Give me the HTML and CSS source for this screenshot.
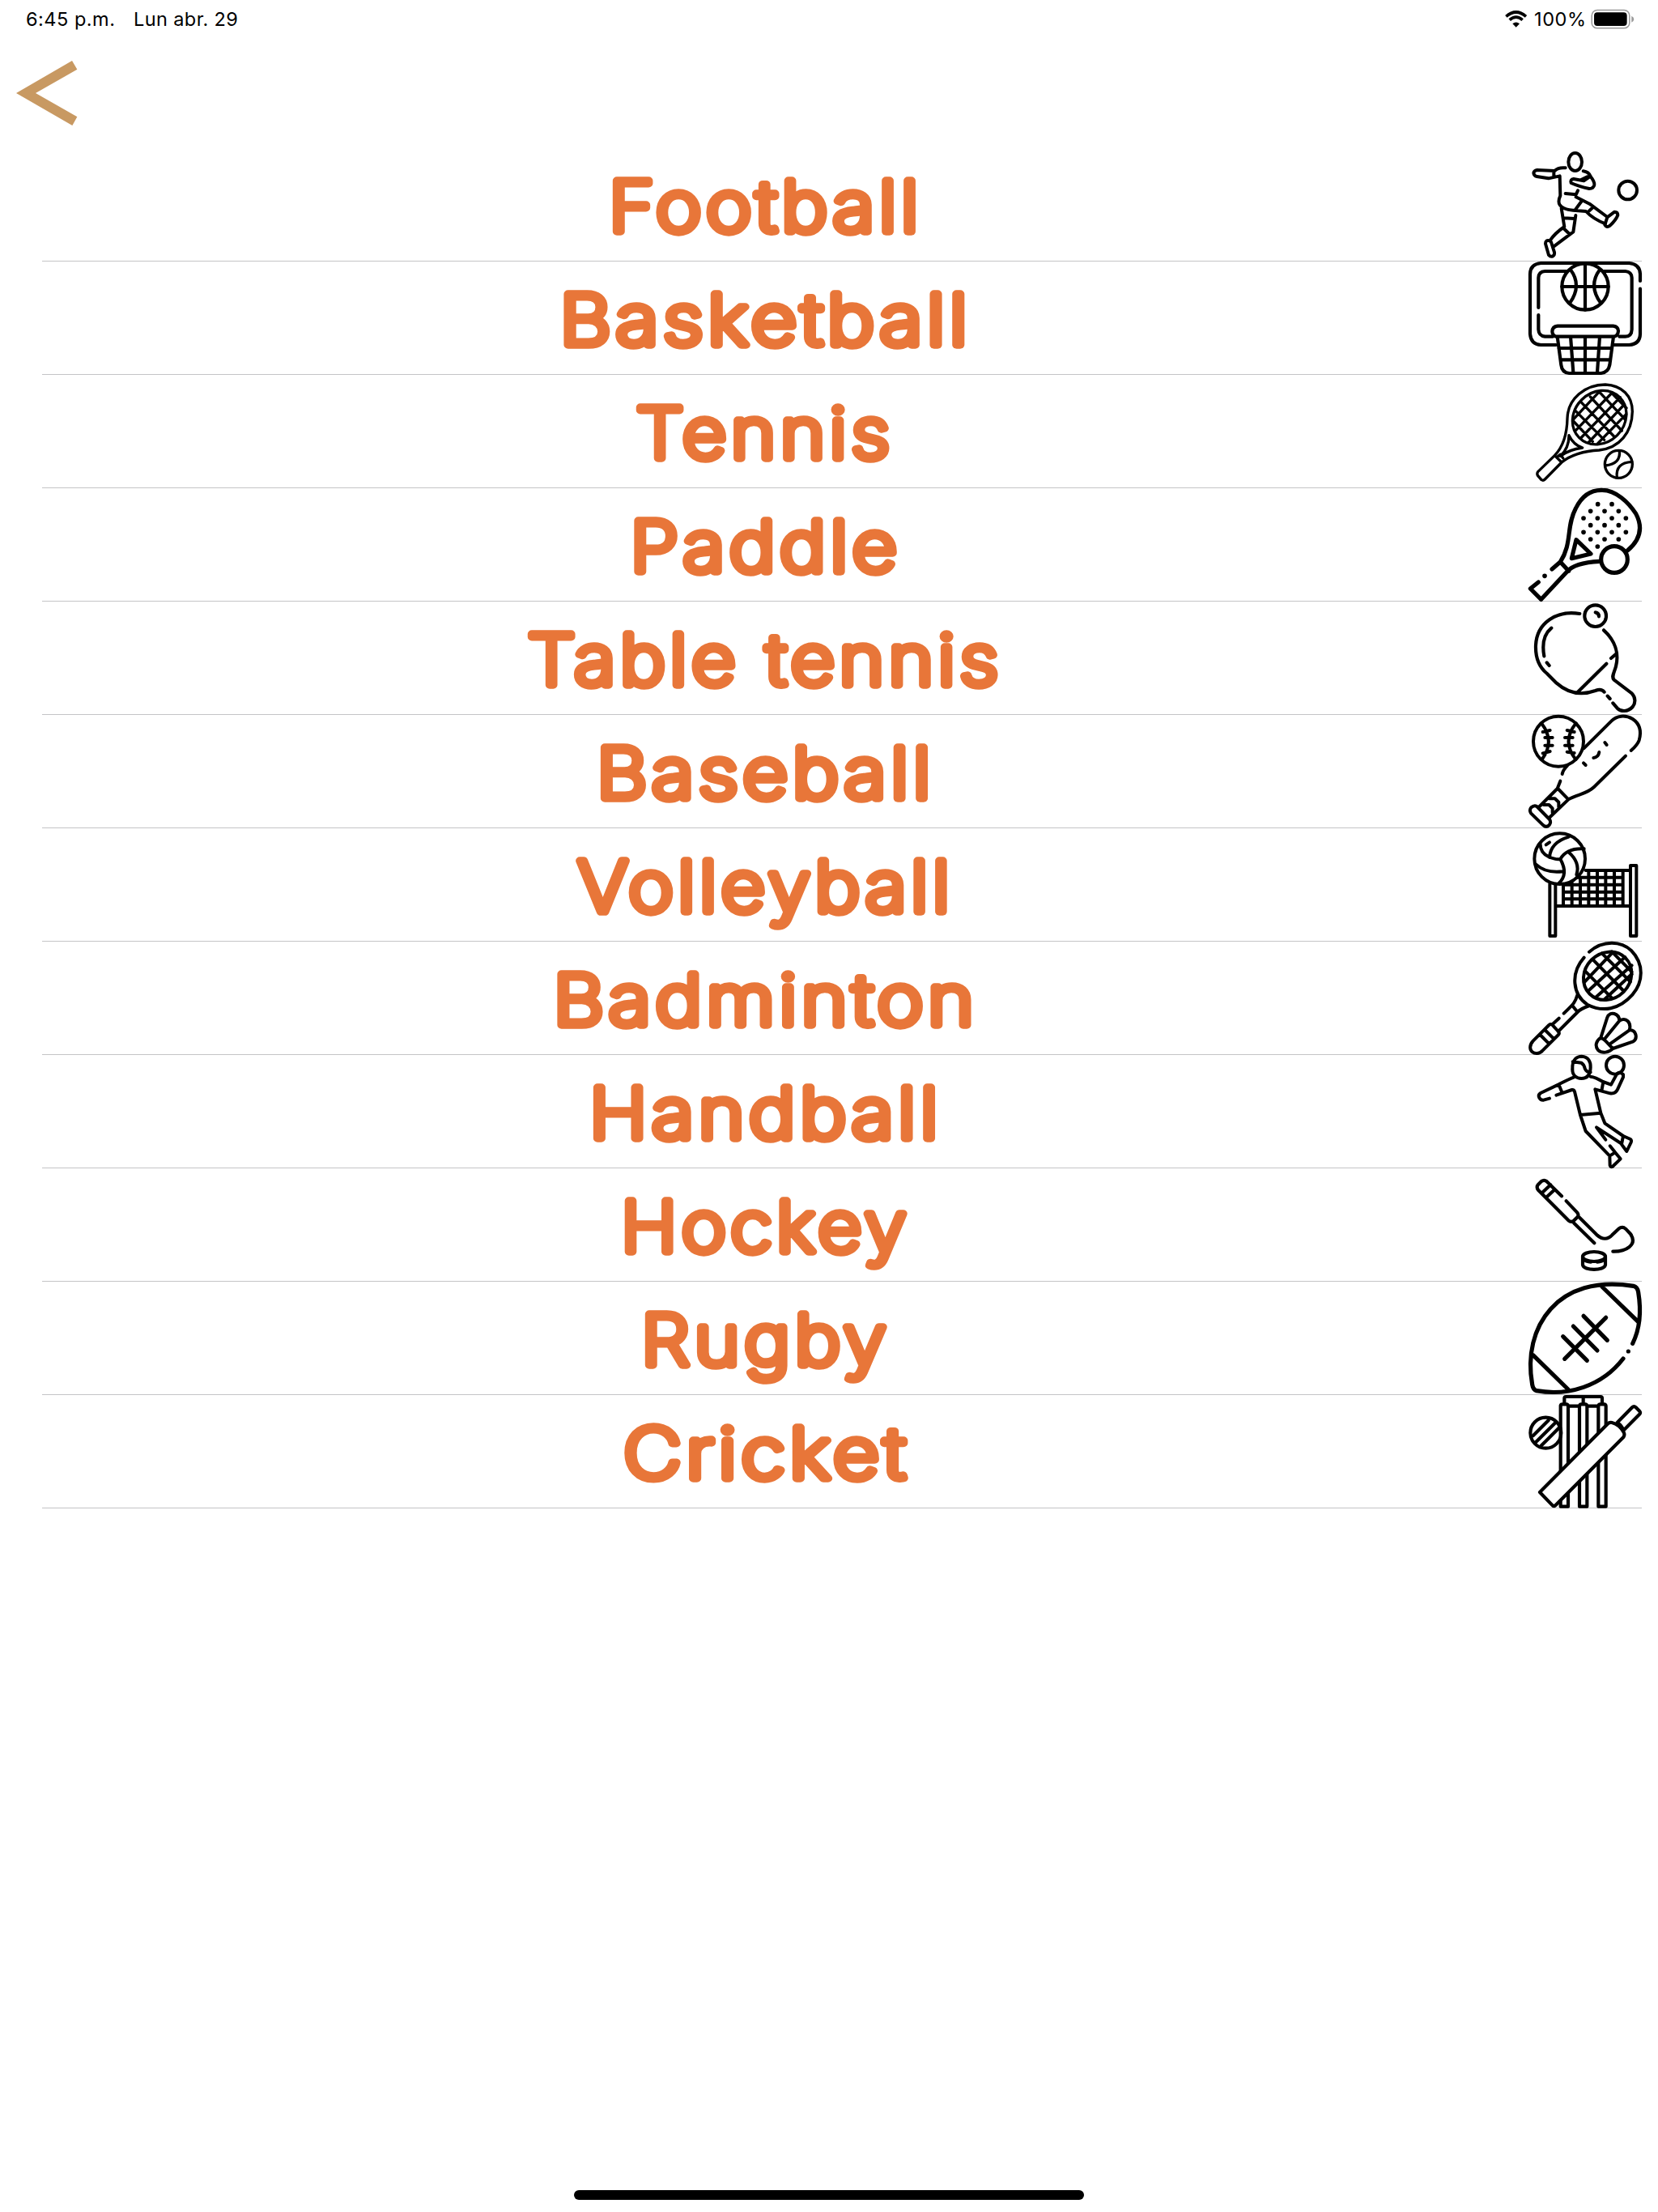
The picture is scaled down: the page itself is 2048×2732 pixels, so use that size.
FILE: index.html
```html
<!DOCTYPE html>
<html lang="es">
<head>
<meta charset="utf-8">
<title>Sports</title>
<link rel="stylesheet" href="styles.css">
</head>
<body>
<header class="status">
  <span class="status-time">6:45 p.m.</span>
  <span class="status-date">Lun abr. 29</span>
  <svg class="wifi" viewBox="34 40 84 64"><path d="M38 62Q75 30 112 62M51 75Q75 54 99 75" fill="none" stroke="#000" stroke-width="11"/><path d="M62 89Q75 78 88 89L75 102Z"/></svg>
  <span class="status-level">100%</span>
  <svg class="battery" viewBox="350 34 162 76"><rect x="353.500" y="38.500" width="140" height="67" rx="20" fill="none" stroke="#999" stroke-width="4.500"/><rect x="362" y="47" width="122" height="50" rx="12"/><path d="M501 60Q510 65 510 72T501 84Z" fill="#999"/></svg>
</header>
<nav class="nav">
  <svg class="back" viewBox="60 225 228 240"><path d="M60 345L267 225L286 257L132 345L286 433L268 465Z"/></svg>
</nav>
<main class="list">
  <div class="row">
    <svg class="label" viewBox="52 0 1836 140"><text x="946" y="103" textLength="388" lengthAdjust="spacingAndGlyphs">Football</text></svg>
    <svg class="icon" viewBox="60 9 420 420">
      <ellipse cx="233" cy="60" rx="25" ry="33"/>
      <circle cx="428" cy="165" r="34"/>
      <path d="M197 82Q171 79 157 93L92 90Q80 93 79 101Q80 112 91 114L134 121L176 112L178 185Q168 207 176 219Q186 236 225 239L273 243Q300 272 345 289M154 93V116M197 177L236 181L243 166M236 190L286 215L352 264M258 204L235 235M299 228L279 247"/>
      <path d="M352 265L379 245Q391 245 391 257Q384 275 362 296Q350 305 343 293ZM182 232L193 300Q158 324 139 352M192 268L230 270M235 258L226 319L153 374M190 306L212 327M139 352Q124 347 123 363L135 405Q141 412 149 410Q158 405 156 395L144 357Z"/>
      <path d="M263 94Q284 97 290 114Q306 134 304 145Q301 159 285 159Q247 151 218 138Q214 124 227 123L265 130L290 113M255 126L278 115"/>
    </svg>
  </div>
  <div class="row">
    <svg class="label" viewBox="52 0 1836 140"><text x="946" y="103" textLength="509" lengthAdjust="spacingAndGlyphs">Basketball</text></svg>
    <svg class="icon bold" viewBox="60 429 420 420">
      <path d="M474 501V475Q472 438 433 435H106Q67 438 66 475V697Q69 736 106 738H162M378 738H433Q473 735 474 697V530M97 600V489Q98 466 121 465H202M340 465H419Q442 467 443 489V681Q442 707 419 707H397M97 627V681Q98 704 121 707H150"/>
      <circle cx="270" cy="522" r="86"/><path d="M270 436V608M184 522H356M215 458Q260 517 213 583M325 458Q280 517 328 583"/>
      <path d="M168 668H374Q392 670 393 686Q392 704 378 707H162Q148 703 148 688Q149 670 168 668ZM167 707L181 812Q184 840 211 843H329Q356 840 361 812L375 707M216 707L226 840M324 707L315 840M270 707V843M172 750H369M179 793H364"/>
    </svg>
  </div>
  <div class="row">
    <svg class="label" viewBox="52 0 1836 140"><text x="945" y="103" textLength="319" lengthAdjust="spacingAndGlyphs">Tennis</text></svg>
    <svg class="icon thin" viewBox="60 9 420 420">
      <path d="M157 308L95 368Q90 376 95 383L108 398Q115 402 121 396L183 333ZM157 308C187 276 203 230 204 170C206 98 269 45 345 45C407 48 445 87 445 145C444 223 397 280 322 288C265 290 213 308 183 333M210 233Q210 281 178 310M210 233C220 254 239 272 260 279Q210 286 178 310M165 314L178 304L188 317"/>
      <ellipse cx="323" cy="167" rx="106" ry="93" transform="rotate(-45 323 167)"/>
      <path d="M289 90L406 216M257 112L377 237M235 143L341 250M226 180L298 256M327 77L418 174M235 215L370 75M226 174L320 74M254 243L400 92M284 258L414 120M317 263L422 155M366 74L423 132"/>
      <circle cx="394" cy="340" r="51"/><path d="M397 290Q403 339 345 345M388 389Q381 335 443 331"/>
    </svg>
  </div>
  <div class="row">
    <svg class="label" viewBox="52 0 1836 140"><text x="946" y="103" textLength="335" lengthAdjust="spacingAndGlyphs">Paddle</text></svg>
    <svg class="icon heavy" viewBox="60 429 420 420">
      <path d="M97 777L67 801L107 841L203 738Q230 705 323 700M147 729L178 702C223 633 199 571 235 504C264 444 306 435 334 436C384 436 431 482 458 523C486 576 474 621 426 661M178 702L209 736M237 620L291 672L220 689Z"/>
      <circle cx="378" cy="693" r="49"/>
      <path class="dots" d="M317 488h.1M369 488h.1M290 514h.1M342 514h.1M394 514h.1M264 540h.1M316 540h.1M369 540h.1M421 540h.1M290 566h.1M342 566h.1M394 566h.1M264 592h.1M316 592h.1M369 592h.1M421 592h.1M290 618h.1M342 618h.1M394 618h.1M316 645h.1M120 754h.1"/>
    </svg>
  </div>
  <div class="row">
    <svg class="label" viewBox="52 0 1836 140"><text x="945" y="103" textLength="587" lengthAdjust="spacingAndGlyphs">Table tennis</text></svg>
    <svg class="icon bold" viewBox="60 9 420 420">
      <path d="M250 54C165 40 91 87 87 171C85 224 107 258 129 276L164 311C210 352 258 357 308 339Q330 330 341 344M339 115C382 154 396 202 384 249C378 273 366 286 377 299L443 349C459 366 456 386 446 399C428 419 402 417 389 404L373 385M353 359L362 369M145 107Q105 140 118 211M128 235L137 246M242 345L349 239M366 219L385 203"/>
      <circle cx="308" cy="62" r="40"/><path d="M308 49Q321 51 321 64"/>
    </svg>
  </div>
  <div class="row">
    <svg class="label" viewBox="52 0 1836 140"><text x="946" y="103" textLength="418" lengthAdjust="spacingAndGlyphs">Baseball</text></svg>
    <svg class="icon" viewBox="60 429 420 420">
      <circle cx="171" cy="527" r="93"/>
      <path d="M108 460Q160 527 110 594M236 460Q182 527 235 594M113 492L140 486M121 513H149M121 542H149M113 571L140 564M203 486L230 492M195 513H224M195 542H224M203 566L230 570"/>
      <path d="M265 553L367 452C387 431 419 428 446 444C470 460 480 487 470 523Q464 540 440 561M420 581L303 696C275 723 242 722 208 742L137 810M204 617Q188 633 185 648M178 674L167 702L98 771M169 702L208 742M136 739H158L172 752V770M116 762H136L149 775V791M343 531L350 540M264 607L272 615M322 567Q319 586 301 588"/>
      <path d="M91 768L138 816Q145 826 137 837Q126 848 115 838L69 793Q62 781 70 772Q81 762 91 768Z"/>
    </svg>
  </div>
  <div class="row">
    <svg class="label" viewBox="52 0 1836 140"><text x="946" y="103" textLength="465" lengthAdjust="spacingAndGlyphs">Volleyball</text></svg>
    <svg class="icon" viewBox="60 9 420 420">
      <path d="M139 215V408H160V215M438 147H460V408H438ZM272 165H438M240 191H409M189 218H409M189 245H409M189 271H409M160 297H438M189 215V297M221 211V297M252 190V297M283 167V297M315 167V297M346 167V297M378 167V297M410 167V297"/>
      <circle cx="176" cy="122" r="94"/>
      <path d="M104 69Q104 99 134 114Q163 127 178 123M138 117Q142 61 209 41M178 123Q202 81 266 85M207 96Q253 135 238 181M178 123Q209 179 173 212M88 143Q124 177 188 169M125 70L138 61"/>
    </svg>
  </div>
  <div class="row">
    <svg class="label" viewBox="52 0 1836 140"><text x="946" y="103" textLength="525" lengthAdjust="spacingAndGlyphs">Badminton</text></svg>
    <svg class="icon" viewBox="60 429 420 420">
      <path d="M285 467C339 421 404 428 441 462C489 511 486 579 445 626C396 681 336 692 278 662C224 626 214 547 266 488M241 627C232 659 222 664 191 695M286 666Q250 679 242 690L170 762M222 665L242 690M173 713L150 734M136 738L77 797C47 831 88 859 112 833L171 774Q177 767 168 759L148 737Q142 733 136 738ZM103 774L134 805M121 756L152 787"/>
      <ellipse cx="353" cy="556" rx="94" ry="84" transform="rotate(-45 353 556)"/>
      <path d="M300 497L410 609M270 538L369 638M332 472L438 578M369 466L443 541M269 577L371 470M281 612L418 486M311 634L443 517M342 643L443 549"/>
      <path d="M328 785L352 710C362 684 396 695 397 722C423 707 442 730 434 757C459 755 466 787 448 799L373 825M397 722L345 786M434 757L365 806M328 785C311 796 305 815 318 831C333 844 358 841 373 825C360 814 345 791 328 785Z"/>
    </svg>
  </div>
  <div class="row">
    <svg class="label" viewBox="52 0 1836 140"><text x="946" y="103" textLength="436" lengthAdjust="spacingAndGlyphs">Handball</text></svg>
    <svg class="icon" viewBox="60 9 420 420">
      <path d="M223 62C221 22 243 14 257 14C282 15 291 35 290 55C289 87 273 96 256 96C238 96 222 84 223 62ZM224 34L256 38Q266 44 269 59Q275 73 290 73"/>
      <circle cx="381" cy="47" r="33"/>
      <path d="M229 91Q214 96 172 118L105 150C91 159 101 177 116 176L138 170M163 158L221 138Q229 137 231 145L252 231L272 291L361 383M290 89Q308 91 336 108L366 119L386 82Q395 67 411 81L411 91L390 137Q382 154 362 151L307 136L328 224L343 262L411 309M252 231L328 224M172 118L184 147M337 110L331 141M346 323L312 277L402 336M362 346L380 368M411 309L438 321Q443 325 440 333L424 366L405 340ZM361 383L381 370L401 394L371 423Q364 426 362 418Z"/>
    </svg>
  </div>
  <div class="row">
    <svg class="label" viewBox="52 0 1836 140"><text x="946" y="103" textLength="358" lengthAdjust="spacingAndGlyphs">Hockey</text></svg>
    <svg class="icon bold" viewBox="60 429 420 420">
      <path d="M183 532L127 477Q118 470 108 477L96 489Q88 498 96 509L208 622Q219 631 229 622L242 609Q248 601 240 592L200 550M111 519L142 490M128 535L157 508M304 706L229 632M249 611L315 677C334 694 354 693 370 676L394 653Q408 642 420 653L438 672C466 713 420 738 373 737M261 756V787C264 809 342 809 345 787V756"/>
      <ellipse cx="303" cy="756" rx="42" ry="18"/><path d="M263 765Q273 775 291 776M343 765Q333 775 315 776"/>
    </svg>
  </div>
  <div class="row">
    <svg class="label" viewBox="52 0 1836 140"><text x="946" y="103" textLength="308" lengthAdjust="spacingAndGlyphs">Rugby</text></svg>
    <svg class="icon heavy" viewBox="60 9 420 420">
      <path d="M411 294C331 398 205 433 90 413Q77 409 74 390C36 176 169 -21 449 25Q464 29 467 48C477 109 478 173 446 238M77 281L207 408M332 27L466 157M264 136L352 226M226 174L315 264M188 212L277 301M194 295L347 142M430 267h.1"/>
    </svg>
  </div>
  <div class="row">
    <svg class="label" viewBox="52 0 1836 140"><text x="947" y="103" textLength="354" lengthAdjust="spacingAndGlyphs">Cricket</text></svg>
    <svg class="icon bold" viewBox="60 429 420 420">
      <circle cx="124" cy="569" r="57"/><path d="M77 580L134 523M87 604L158 533M108 616L171 553"/>
      <path d="M193 461V441Q193 435 199 435H327Q333 435 333 441V461M263 437V461M179 842V468Q180 463 186 463H201Q207 464 207 470V842ZM249 842V470Q250 463 256 463H271Q277 464 277 470V842ZM319 842V470Q320 463 326 463H341Q347 464 347 470V842ZM208 470H249M278 470H319"/>
      <path class="solid" d="M102 789L353 536Q360 529 369 531Q397 538 413 567Q418 576 412 585L160 838Q153 843 147 836ZM389 531L444 475Q451 468 458 475L472 489Q477 495 470 502L412 560Q407 543 389 531Z"/>
    </svg>
  </div>
</main>
<footer class="home"><div class="home-bar"></div></footer>
</body>
</html>
```
FILE: styles.css
```css
* { box-sizing: border-box; }
body {
  margin: 0;
  width: 2048px;
  height: 2732px;
  display: flex;
  flex-direction: column;
  background: #fff;
  font-family: Inter, "Liberation Sans", sans-serif;
  overflow: hidden;
}
svg { display: block; flex: none; }
.status {
  height: 48px;
  padding: 0 29px 0 32px;
  display: flex;
  align-items: center;
  font-size: 23.5px;
  font-weight: 440;
  line-height: 48px;
  color: #000;
  white-space: nowrap;
}
.status-time { width: 133px; letter-spacing: .5px; }
.status-date { letter-spacing: .4px; }
.wifi { width: 28px; height: 21.3px; margin-left: auto; margin-right: 5px; }
.status-level { width: 73px; padding-left: 3px; letter-spacing: .6px; }
.battery { width: 54px; height: 25.3px; }
.nav { height: 135px; padding: 27px 20px; }
.back { width: 76px; height: 80px; fill: #c89962; }
.list {
  padding: 0 20px 0 52px;
  display: flex;
  flex-direction: column;
}
.row {
  height: 140px;
  display: flex;
  box-shadow: inset 0 -1px #c4c4c6;
}
.label { width: 1836px; height: 140px; }
.label text {
  font-size: 87px;
  font-weight: 200;
  letter-spacing: 5px;
  text-anchor: middle;
  fill: #e87639;
  stroke: #e87639;
  stroke-width: 9.5px;
  stroke-linejoin: round;
}
.icon {
  width: 140px;
  height: 140px;
  overflow: visible;
  fill: none;
  stroke: #000;
  stroke-width: 12;
  stroke-linecap: round;
  stroke-linejoin: round;
}
.icon.thin { stroke-width: 10; }
.icon.bold { stroke-width: 12.5; }
.icon.heavy { stroke-width: 15.5; }
.icon .dots { stroke-width: 17; }
.icon .solid { fill: #fff; }
.home {
  margin-top: auto;
  height: 27px;
  display: flex;
  justify-content: center;
}
.home-bar { width: 630px; height: 12px; border-radius: 6px; background: #000; }
```
